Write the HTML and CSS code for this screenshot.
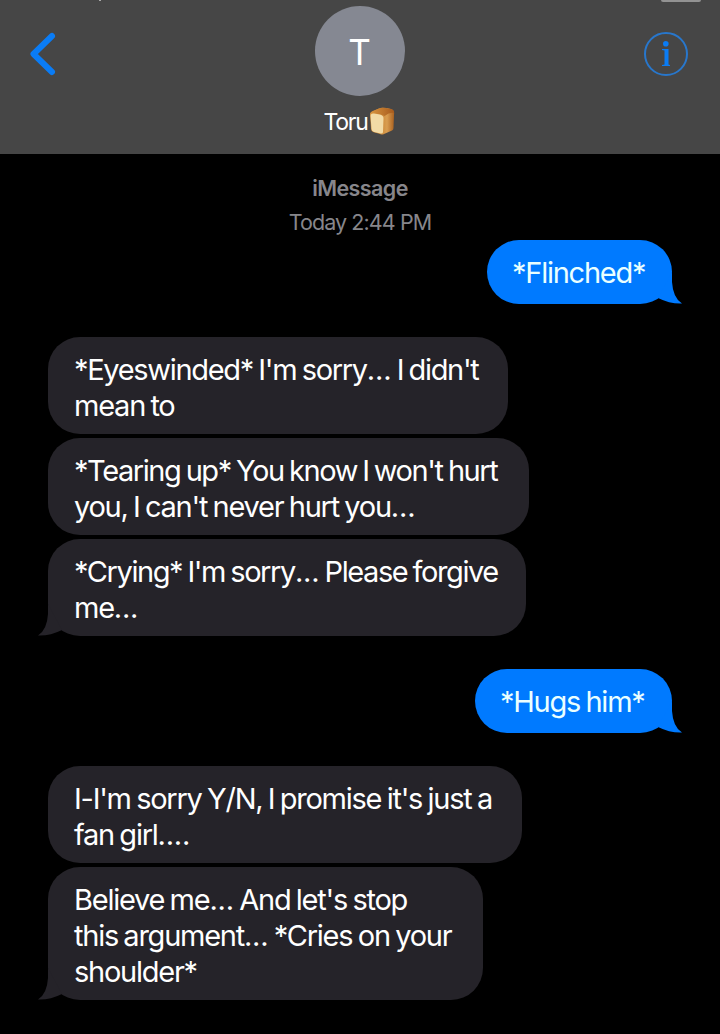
FILE: index.html
```html
<!DOCTYPE html>
<html lang="en">
<head>
    <meta charset="UTF-8">
    <meta name="viewport" content="width=device-width, initial-scale=1.0">
    <title>Toru</title>
    <link rel="stylesheet" href="styles.css">
</head>
<body>
    <header class="chat-header">
        <span class="status-mark"></span>
        <span class="status-battery"></span>
        <svg class="back-icon" width="30" height="46" viewBox="0 0 30 46">
            <path d="M24 5L5.500 23L24 41" />
        </svg>
        <div class="contact">
            <div class="avatar">T</div>
            <div class="contact-name">
                <span>Toru</span>
                <svg class="bread" width="26" height="28" viewBox="0 0 26 28">
                    <defs>
                        <linearGradient id="crust" x1="0" x2="1">
                            <stop offset="0.4" stop-color="#c98534" />
                            <stop offset="0.7" stop-color="#d99d50" />
                            <stop offset="1" stop-color="#a9601f" />
                        </linearGradient>
                        <linearGradient id="top" x1="0" x2="1">
                            <stop offset="0" stop-color="#d9963f" />
                            <stop offset="1" stop-color="#a65a1d" />
                        </linearGradient>
                    </defs>
                    <path fill="url(#crust)" d="M1 8Q1 5 4 4L10 1.500Q13 0 22 2Q26 3 25 8L24.500 21Q24.500 22.500 23 23.500L15 27Q13 28 11 27L4 25Q2 24 2 22Z" />
                    <path fill="url(#top)" d="M1 8Q1 5 4 4L10 1.500Q13 0 22 2Q25.500 3 25 6Q21 5 15.500 9Q12 6 1 8Z" />
                    <path fill="#f2dba6" d="M1.500 9Q1.500 6 5 6.500L11 7.500Q15 8.500 14.500 12L14 25Q14 27 11.500 26.500L5 25Q2.500 24 2.500 22Z" />
                </svg>
            </div>
        </div>
        <svg class="info-icon" width="46" height="46" viewBox="0 0 46 46">
            <circle cx="23" cy="23" r="21" />
            <circle class="info-fill" cx="22.800" cy="12.800" r="2.800" />
            <path class="info-fill" d="M19 18H25.500V33.500L27 34V35H19V34L21.500 33.500V19.500L19 19Z" />
        </svg>
    </header>

    <main class="chat">
        <div class="timestamp">
            <strong>iMessage</strong>
            <span>Today 2:44 PM</span>
        </div>

        <div class="group sent">
            <div class="bubble b1">
                <span>*Flinched*</span>
                <svg class="tail" width="24" height="32" viewBox="0 0 24 32"><path d="M14 0V10Q15 26 24 31.500Q12 32 0 26Z" /></svg>
            </div>
        </div>

        <div class="group received">
            <div class="bubble b2"><span class="snug">*Eyeswinded* I'm sorry<i>...</i> I didn't</span><br><span>mean to</span></div>
            <div class="bubble b3"><span class="tight">*Tearing up* You know I won't hurt</span><br><span>you, I can't never hurt you<i>...</i></span></div>
            <div class="bubble b4">
                <span class="tight">*Crying* I'm sorry<i>...</i> Please forgive</span><br><span>me<i>...</i></span>
                <svg class="tail" width="24" height="32" viewBox="0 0 24 32"><path d="M14 0V10Q15 26 24 31.500Q12 32 0 26Z" /></svg>
            </div>
        </div>

        <div class="group sent">
            <div class="bubble b5">
                <span>*Hugs him*</span>
                <svg class="tail" width="24" height="32" viewBox="0 0 24 32"><path d="M14 0V10Q15 26 24 31.500Q12 32 0 26Z" /></svg>
            </div>
        </div>

        <div class="group received">
            <div class="bubble b6"><span>I-I'm sorry Y/N, I promise it's just a</span><br><span>fan girl<i>....</i></span></div>
            <div class="bubble b7">
                <span>Believe me<i>...</i> And let's stop</span><br><span>this argument<i>...</i> *Cries on your</span><br><span>shoulder*</span>
                <svg class="tail" width="24" height="32" viewBox="0 0 24 32"><path d="M14 0V10Q15 26 24 31.500Q12 32 0 26Z" /></svg>
            </div>
        </div>
    </main>
</body>
</html>
```
FILE: styles.css
```css
* {
    box-sizing: border-box;
}

body {
    margin: 0;
    background: #000;
    color: #fff;
    font-family: Inter, "Liberation Sans", sans-serif;
}

.chat-header {
    position: relative;
    display: flex;
    justify-content: space-between;
    align-items: flex-start;
    height: 154px;
    padding: 6px 31px 0 25px;
    background: #464646;
}

/* bottom edge of the status bar */
.status-mark,
.status-battery {
    position: absolute;
    top: 0;
}

.status-mark {
    left: 99px;
    width: 2px;
    height: 1px;
    background: #aaa;
}

.status-battery {
    left: 661px;
    width: 40px;
    height: 2px;
    background: #929292;
    border-radius: 0 0 3px 3px;
}

.back-icon {
    margin: 25px 18px 0 3px;
    fill: none;
    stroke: #0a7cf5;
    stroke-width: 6;
    stroke-linecap: round;
    stroke-linejoin: round;
}

.contact {
    display: flex;
    flex-direction: column;
    align-items: center;
}

.avatar {
    width: 90px;
    height: 90px;
    border-radius: 50%;
    background: #858892;
    font-size: 35px;
    line-height: 92px;
    text-align: center;
}

.contact-name {
    display: flex;
    align-items: center;
    height: 28px;
    margin-top: 11px;
    font-size: 23px;
    line-height: 30px;
    letter-spacing: -1.3px;
}

.contact-name span {
    margin: 2px 2px 0 0;
}

.info-icon {
    margin-top: 25px;
    fill: none;
    stroke: #2877cc;
    stroke-width: 2;
}

.info-fill {
    fill: #0a7cf5;
    stroke: none;
}

.chat {
    padding: 17px 48px 0;
}

.timestamp {
    display: flex;
    flex-direction: column;
    align-items: center;
    height: 69px;
    color: #87868b;
    font-size: 21.5px;
    line-height: 34px;
    letter-spacing: -0.9px;
}

.timestamp strong {
    font-weight: 600;
    letter-spacing: -0.6px;
}

.group {
    display: flex;
    flex-direction: column;
    align-items: flex-start;
    gap: 4px;
    margin-bottom: 33px;
}

.sent {
    align-items: flex-end;
}

.bubble {
    position: relative;
    padding: 15px 26px 10px;
    border-radius: 32px;
    background: #252329;
    font-size: 29px;
    line-height: 36px;
    letter-spacing: -1.25px;
    word-spacing: -1.5px;
    white-space: nowrap;
}

.bubble i {
    font-style: normal;
    letter-spacing: -0.2px;
}

.snug {
    letter-spacing: -1.31px;
}

.tight {
    letter-spacing: -1.42px;
}

.sent .bubble {
    padding: 15px 25px 13px;
    background: #007aff;
    color: #eaffff;
}

.tail {
    position: absolute;
    right: -10px;
    bottom: 0;
    fill: #007aff;
}

.received .tail {
    right: auto;
    left: -10px;
    fill: #252329;
    transform: scaleX(-1);
}

.b1 { width: 185px; }
.b2 { width: 460px; }
.b3 { width: 481px; }
.b4 { width: 478px; }
.b5 { width: 197px; }
.b6 { width: 474px; }
.b7 { width: 435px; }
```
